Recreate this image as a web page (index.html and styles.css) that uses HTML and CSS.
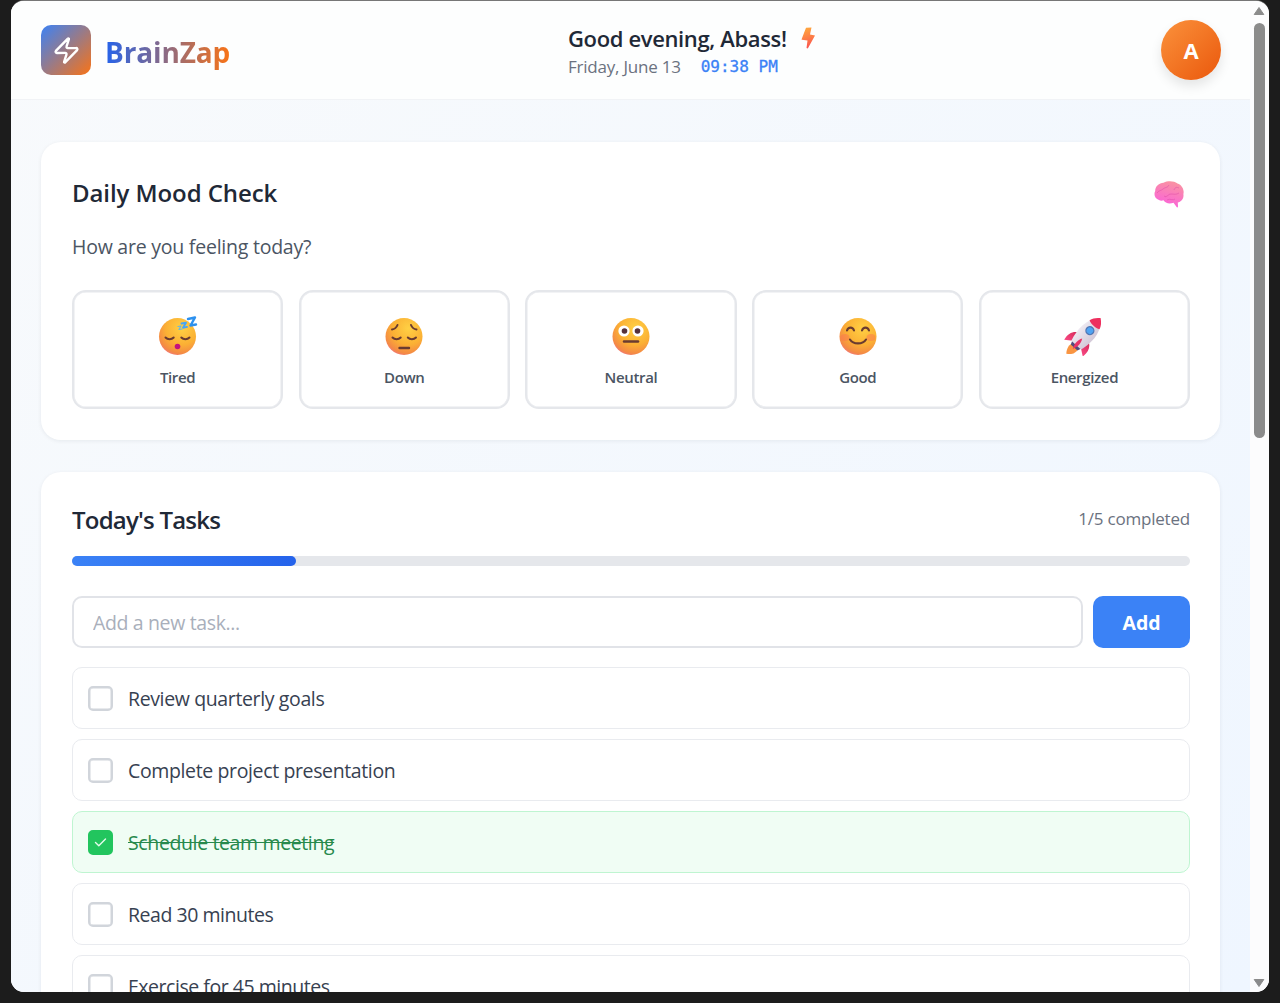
FILE: index.html
```html
<!DOCTYPE html>
<html lang="en">
<head>
<meta charset="utf-8">
<title>BrainZap</title>
<link rel="stylesheet" href="styles.css">
</head>
<body>
<svg class="defs" width="0" height="0" aria-hidden="true">
  <defs>
    <radialGradient id="face" cx="0.62" cy="0.28" r="0.8">
      <stop offset="0" stop-color="#ffd044"/><stop offset="0.55" stop-color="#fbb034"/><stop offset="0.85" stop-color="#f48a45"/><stop offset="1" stop-color="#f0708c"/>
    </radialGradient>
    <linearGradient id="bolt" x1="0" y1="0" x2="0.2" y2="1"><stop offset="0" stop-color="#ffae3c"/><stop offset="1" stop-color="#fb5750"/></linearGradient>
    <linearGradient id="brain" x1="0.7" y1="0" x2="0.4" y2="1"><stop offset="0" stop-color="#f994a0"/><stop offset="1" stop-color="#fb61dc"/></linearGradient>
    <linearGradient id="hull" x1="0" y1="0" x2="1" y2="0"><stop offset="0" stop-color="#eee9f1"/><stop offset="1" stop-color="#d3c9d8"/></linearGradient>
    <linearGradient id="fin" x1="0" y1="0" x2="0" y2="1"><stop offset="0" stop-color="#d32957"/><stop offset="1" stop-color="#fa4a85"/></linearGradient>
  </defs>
</svg>
<div class="window">
  <div class="page">
    <header class="header">
      <div class="brand">
        <div class="logo">
          <svg width="29" height="29" viewBox="0 0 24 24" fill="none" stroke="#fff" stroke-width="2" stroke-linecap="round" stroke-linejoin="round"><path d="M4 14a1 1 0 0 1-.78-1.63l9.9-10.2a.5.5 0 0 1 .86.46l-1.920 6.020A1 1 0 0 0 13 10h7a1 1 0 0 1 .78 1.630l-9.900 10.200a.5.5 0 0 1-.86-.46l1.920-6.020A1 1 0 0 0 11 14z"/></svg>
        </div>
        <span class="brand-name">BrainZap</span>
      </div>
      <div class="greeting">
        <div class="hello"><span class="hello-text">Good evening, Abass!</span>
          <svg width="14" height="22" viewBox="0 0 14 22"><path d="M5 .8 10.500.4 9 7.500 14 8.500 6.800 21.500 5.500 21 6.500 13.500 1 12.800Q.4 12.700.7 11.900Z" fill="url(#bolt)"/></svg>
        </div>
        <div class="when"><span class="date">Friday, June 13</span><span class="time">09:38 PM</span></div>
      </div>
      <div class="avatar">A</div>
    </header>
    <main class="main">
      <section class="card mood-card">
        <div class="card-head">
          <h2 class="title mood-title">Daily Mood Check</h2>
          <svg class="brain" width="30" height="27" viewBox="0 0 30 27"><path d="M5 19C1 18-.6 13.500 1.200 10 1 5.500 5 2 9.500 1.700 14-.5 20-.2 23.500 2.500 28 4 30.500 9 29.400 13c.7 5-2.400 7.600-5.600 8.400L24 25.600q-.1 1.200-1.200.6L19.500 21.800C15 23.200 11 22 9.500 19.300 8 20 6 19.800 5 19Z" fill="url(#brain)"/><path d="M3 12c2-3 4-2 6-4s5-1 6-4M10 15c3 2 4-2 7-2s5 1 8-1M20 9c1-3 3-3 5-2M13 19c3-2 6 1 8-1" fill="none" stroke="#dd4ba5" stroke-width="1" opacity=".5"/></svg>
        </div>
        <p class="question">How are you feeling today?</p>
        <div class="moods">
          <div class="mood">
            <svg width="40" height="40" viewBox="0 0 40 40"><circle cx="19.500" cy="20.500" r="18.500" fill="url(#face)"/><g fill="none" stroke="#693b30" stroke-width="2" stroke-linecap="round"><path d="M7.500 21.500c2.200 2.400 6 2.400 8.200 0M23.300 21.500c2.200 2.400 6 2.400 8.200 0"/></g><circle cx="19.500" cy="30.500" r="2.800" fill="#c4127d"/><g fill="none" stroke="#2d91ef" stroke-linecap="round" stroke-linejoin="round"><path d="M30 3l7-1.500-4.500 8 5.500-1" stroke-width="2.400"/><path d="M23.500 7.500l4.500-.8-3 5 4-.8" stroke-width="1.900" stroke="#45a5f5"/><path d="M20 10.500l3-.5-2 3.500 3-.5" stroke-width="1.200" stroke="#63b5e8"/></g></svg>
            <span class="mood-label">Tired</span>
          </div>
          <div class="mood">
            <svg width="40" height="40" viewBox="0 0 40 40"><circle cx="20" cy="20.500" r="18.500" fill="url(#face)"/><g fill="none" stroke="#693b30" stroke-width="2" stroke-linecap="round"><path d="M8.500 21.500c2.200 2.400 6 2.400 8.200 0M23.800 21.500c2.200 2.400 6 2.400 8.200 0M8 13.500c2.500-.3 4.500-2 5.500-4.500M32.500 13.500c-2.500-.3-4.500-2-5.500-4.500"/></g><path d="M15.500 32h9.500" stroke="#693b30" stroke-width="2.400" stroke-linecap="round"/></svg>
            <span class="mood-label">Down</span>
          </div>
          <div class="mood">
            <svg width="40" height="40" viewBox="0 0 40 40"><circle cx="20" cy="20.500" r="18.500" fill="url(#face)"/><circle cx="13" cy="15" r="5.600" fill="#fff"/><circle cx="27" cy="15" r="5.600" fill="#fff"/><circle cx="13.500" cy="15" r="2.800" fill="#55313b"/><circle cx="26.500" cy="15" r="2.800" fill="#55313b"/><path d="M13 25.500h14" stroke="#693b30" stroke-width="2.500" stroke-linecap="round"/></svg>
            <span class="mood-label">Neutral</span>
          </div>
          <div class="mood">
            <svg width="40" height="40" viewBox="0 0 40 40"><circle cx="20" cy="20.500" r="18.500" fill="url(#face)"/><ellipse cx="7" cy="21.500" rx="4.500" ry="3.500" fill="#fb7550" opacity=".5"/><ellipse cx="33" cy="21.500" rx="4.500" ry="3.500" fill="#fb7550" opacity=".5"/><g fill="none" stroke="#693b30" stroke-width="2.100" stroke-linecap="round"><path d="M9 14.500c1.200-3.800 5.800-3.800 7 0M24 14.500c1.200-3.800 5.800-3.800 7 0M12 23.500c3.200 5.200 12.800 5.200 16 0"/></g></svg>
            <span class="mood-label">Good</span>
          </div>
          <div class="mood">
            <svg class="rocket" width="40" height="40" viewBox="0 0 40 40"><g transform="translate(-.5 1) rotate(42 20 20)"><path d="M16 32C14 37 16 41 18.500 44 23 41 25.500 38 24 32Z" fill="#f99542"/><path d="M13 20C8 23 6 28 7.500 35L14.500 30ZM27 20C32 23 34 28 32.500 35L25.500 30Z" fill="url(#fin)"/><path d="M14 30h12l-1.500 4h-9Z" fill="#514c7d"/><path d="M20-5C10 3 9.500 18 13.500 31H26.500C30.500 18 30 3 20-5Z" fill="url(#hull)"/><path d="M20-5.500C16.500-3 14.200 0 13.300 3.500 17 5.500 23 5.500 26.700 3.500 25.800 0 23.500-3 20-5.500Z" fill="#ee2f5e"/><circle cx="20.500" cy="11" r="4.600" fill="#5076b4"/><circle cx="20.500" cy="11" r="3.300" fill="#4fa3f2"/><path d="M20 22c-2.500 4-2.500 9 0 14 2.500-5 2.500-10 0-14Z" fill="#e83368"/></g></svg>
            <span class="mood-label">Energized</span>
          </div>
        </div>
      </section>
      <section class="card tasks-card">
        <div class="card-head">
          <h2 class="title tasks-title">Today's Tasks</h2>
          <span class="count">1/5 completed</span>
        </div>
        <div class="progress"><div class="progress-fill" style="width:20%"></div></div>
        <div class="add-row">
          <input class="task-input" type="text" placeholder="Add a new task...">
          <button class="add-button">Add</button>
        </div>
        <div class="tasks">
          <div class="task"><span class="check"></span><span class="task-text">Review quarterly goals</span></div>
          <div class="task"><span class="check"></span><span class="task-text">Complete project presentation</span></div>
          <div class="task done"><span class="check"><svg width="15" height="15" viewBox="0 0 15 15" fill="none" stroke="#e4fbec" stroke-width="1.400" stroke-linecap="round" stroke-linejoin="round"><path d="M2.500 7.500l3.300 3.200L12.500 4"/></svg></span><span class="task-text">Schedule team meeting</span></div>
          <div class="task"><span class="check"></span><span class="task-text tight">Read 30 minutes</span></div>
          <div class="task"><span class="check"></span><span class="task-text tight">Exercise for 45 minutes</span></div>
        </div>
      </section>
    </main>
  </div>
  <div class="scrollbar">
    <svg class="arrow" width="12" height="10" viewBox="0 0 12 10"><path d="M6 1.500 10.800 8.500H1.200Z" fill="#8b8b8b" stroke="#8b8b8b" stroke-linejoin="round"/></svg>
    <div class="thumb"></div>
    <svg class="arrow down" width="12" height="10" viewBox="0 0 12 10"><path d="M6 8.500 10.800 1.500H1.200Z" fill="#8b8b8b" stroke="#8b8b8b" stroke-linejoin="round"/></svg>
  </div>
</div>
</body>
</html>
```
FILE: styles.css
```css
* { box-sizing: border-box; }
html, body { height: 100%; }
body {
  margin: 0;
  padding: 1px 11px 11px;
  overflow: hidden;
  background: #1c1c1c;
  font-family: "Open Sans", "Noto Sans", sans-serif;
  color: #1f2937;
}
.defs { display: block; height: 0; }
svg { display: block; flex: none; }
.window {
  display: flex;
  width: 1258px;
  height: 991px;
  overflow: hidden;
  border-radius: 13px;
  background: #fcfcfd;
  box-shadow: 0 -1px 0 #777;
}
.page {
  width: 1239px;
  background: linear-gradient(135deg, #f8fafc, #eff6ff);
}
.header {
  display: flex;
  justify-content: space-between;
  align-items: center;
  height: 99px;
  padding: 0 29px 0 30px;
  background: #fdfefe;
  border-bottom: 1px solid #f1f3f6;
}
.brand { display: flex; align-items: center; gap: 14px; width: 190px; }
.logo {
  display: grid;
  place-items: center;
  width: 50px;
  height: 50px;
  border-radius: 10px;
  background: linear-gradient(135deg, #3b82f6, #f97316);
}
.brand-name {
  font-size: 28px;
  line-height: 40px;
  font-weight: 700;
  letter-spacing: -0.150px;
  padding-top: 3px;
  color: transparent;
  background: linear-gradient(90deg, #2563eb, #f97316);
  -webkit-background-clip: text;
  background-clip: text;
}
.greeting { width: 256px; padding-top: 1px; }
.hello { display: flex; align-items: center; gap: 14px; height: 32px; }
.hello-text { font-size: 22px; line-height: 30px; font-weight: 600; letter-spacing: -0.360px; white-space: nowrap; }
.when { display: flex; gap: 20px; height: 25px; align-items: center; font-size: 17px; white-space: nowrap; }
.date { color: #6b7280; letter-spacing: -0.220px; }
.time { font-family: "DejaVu Sans Mono", monospace; font-size: 16px; color: #3b82f6; -webkit-text-stroke: 0.300px #3b82f6; }
.avatar {
  display: grid;
  place-items: center;
  width: 60px;
  height: 60px;
  border-radius: 50%;
  background: linear-gradient(135deg, #fb923c, #ea580c);
  color: #fff;
  font-size: 22px;
  font-weight: 700;
  box-shadow: 0 6px 12px rgba(0, 0, 0, .1);
}
.main { display: flex; flex-direction: column; gap: 32px; padding: 42px 30px 0; }
.card {
  padding: 0 30px 0 31px;
  background: #fff;
  border-radius: 20px;
  box-shadow: 0 1px 4px rgba(15, 23, 42, .07);
}
.mood-card { height: 298px; padding-top: 31px; }
.tasks-card { height: 640px; padding-top: 28px; }
.card-head { display: flex; justify-content: space-between; align-items: center; height: 40px; }
.title { margin: 0; font-size: 24px; line-height: 40px; font-weight: 600; white-space: nowrap; }
.mood-title { letter-spacing: -0.080px; }
.tasks-title { letter-spacing: -0.780px; }
.brain { margin: 2px 6px 0 0; }
.question { margin: 18px 0 27px; font-size: 19.500px; line-height: 32px; letter-spacing: -0.230px; color: #4b5563; width: max-content; }
.moods { display: grid; grid-template-columns: repeat(5, 1fr); gap: 15.500px; }
.mood {
  display: flex;
  flex-direction: column;
  align-items: center;
  gap: 10px;
  height: 119px;
  padding-top: 24px;
  border: 2px solid #e5e7eb;
  border-radius: 14px;
  box-shadow: inset 0 0 0 .5px #e5e7eb;
}
.mood-label { font-size: 15px; line-height: 22px; font-weight: 600; letter-spacing: -0.350px; color: #4b5563; }
.count { margin-top: -3px; font-size: 17px; letter-spacing: -0.200px; color: #6b7280; }
.progress { height: 10px; margin-top: 16px; border-radius: 5px; background: #e5e7eb; }
.progress-fill { height: 100%; border-radius: 5px; background: linear-gradient(90deg, #3b82f6, #2563eb); }
.add-row { display: flex; gap: 10px; margin: 30px 0 19px; }
.task-input {
  flex: 1;
  height: 52px;
  padding: 0 19px;
  border: 2px solid #e1e3e8;
  border-radius: 10px;
  font: 19.500px "Open Sans", sans-serif;
  letter-spacing: -0.360px;
}
.task-input::placeholder { color: #a9afbb; }
.add-button {
  width: 97px;
  height: 52px;
  border: 0;
  border-radius: 10px;
  background: #3b82f6;
  color: #fff;
  font: 700 19.500px "Open Sans", sans-serif;
}
.tasks { display: flex; flex-direction: column; gap: 10px; }
.task {
  display: flex;
  align-items: center;
  gap: 15px;
  height: 62px;
  padding: 0 15px;
  border: 1px solid #e9ebef;
  border-radius: 10px;
}
.check {
  display: grid;
  place-items: center;
  width: 25px;
  height: 25px;
  border: 2px solid #d1d5db;
  box-shadow: inset 0 0 0 .5px #d1d5db;
  border-radius: 5px;
}
.task-text { padding-top: 1px; font-size: 19.500px; line-height: 30px; letter-spacing: -0.370px; color: #374151; white-space: nowrap; }
.tight { letter-spacing: -0.470px; }
.done { background: #f0fdf4; border-color: #bff5d1; }
.done .check { background: #22c55e; border-color: #22c55e; box-shadow: none; }
.done .task-text { color: #27894c; text-decoration: line-through; }
.scrollbar {
  display: flex;
  flex-direction: column;
  align-items: center;
  width: 19px;
  padding: 5px 1px 4px 0;
  background: #fcfcfd;
}
.thumb { width: 11px; height: 415px; margin-top: 7px; border-radius: 6px; background: #8b8b8b; }
.down { margin-top: auto; }
```
